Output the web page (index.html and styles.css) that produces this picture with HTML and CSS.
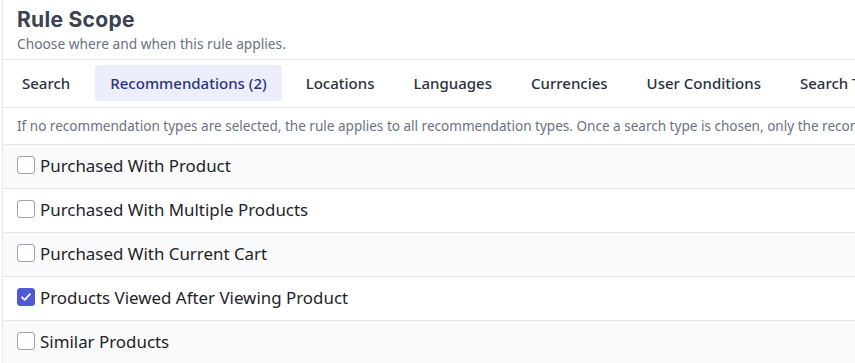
FILE: index.html
```html
<!DOCTYPE html>
<html>
<head>
<meta charset="utf-8">
<link rel="stylesheet" href="styles.css">
</head>
<body>
<div class="card">
  <div class="header">
    <div class="title">Rule Scope</div>
    <div class="subtitle">Choose where and when this rule applies.</div>
  </div>
  <div class="tabs">
    <div class="tab">Search</div>
    <div class="tab active">Recommendations (2)</div>
    <div class="tab">Locations</div>
    <div class="tab">Languages</div>
    <div class="tab">Currencies</div>
    <div class="tab">User Conditions</div>
    <div class="tab">Search Terms</div>
  </div>
  <div class="info">If no recommendation types are selected, the rule applies to all recommendation types. Once a search type is chosen, only the recommendation types selected will be affected.</div>
  <div class="list">
    <label class="row"><span class="box"></span><span class="label">Purchased With Product</span></label>
    <label class="row"><span class="box"></span><span class="label">Purchased With Multiple Products</span></label>
    <label class="row"><span class="box"></span><span class="label">Purchased With Current Cart</span></label>
    <label class="row"><span class="box checked"><svg viewBox="0 0 18 18" width="18" height="18"><path d="M4.6 9.3 L7.6 12.2 L13.4 5.8" fill="none" stroke="#fff" stroke-width="2" stroke-linecap="round" stroke-linejoin="round"/></svg></span><span class="label">Products Viewed After Viewing Product</span></label>
    <label class="row"><span class="box"></span><span class="label">Similar Products</span></label>
  </div>
</div>
</body>
</html>
```
FILE: styles.css
```css
html, body {
  margin: 0;
  padding: 0;
  background: #ffffff;
  overflow: hidden;
}
body {
  font-family: "Noto Sans", "Open Sans", sans-serif;
  width: 855px;
  height: 363px;
}
.card {
  margin-left: 2px;
  border-left: 1px solid #e5e7eb;
  width: 853px;
  overflow: hidden;
  background: #fff;
}
.header {
  padding: 5px 14px 6px;
  border-bottom: 1px solid #e5e7eb;
}
.title {
  font-family: "Inter", "Open Sans", sans-serif;
  font-size: 21px;
  line-height: 30px;
  font-weight: 700;
  letter-spacing: 0.3px;
  color: #3b4252;
}
.subtitle {
  font-size: 13.75px;
  line-height: 18px;
  color: #6b7280;
}
.tabs {
  display: flex;
  gap: 9px;
  padding: 5px 4px 6px;
  border-bottom: 1px solid #e5e7eb;
  white-space: nowrap;
}
.tab {
  height: 36px;
  line-height: 36px;
  padding: 0 15px;
  border-radius: 3px;
  font-size: 15px;
  font-weight: 500;
  color: #2b3040;
  flex: none;
}
.tab:first-child {
  margin-right: 1px;
}
.tab.active {
  background: #eceefb;
  color: #2a3384;
}
.info {
  height: 36px;
  line-height: 36px;
  padding: 0 14px;
  font-size: 13.55px;
  color: #6b7280;
  white-space: nowrap;
  overflow: hidden;
  border-bottom: 1px solid #e5e7eb;
}
.list {
  display: flex;
  flex-direction: column;
}
.row {
  display: flex;
  align-items: center;
  gap: 5px;
  box-sizing: border-box;
  height: 44px;
  padding: 0 14px 3px;
  border-bottom: 1px solid #e5e7eb;
  background: #ffffff;
}
.row:nth-child(odd) {
  background: #f9fafb;
}
.box {
  width: 16px;
  height: 16px;
  border: 1px solid #9ca3af;
  border-radius: 3px;
  background: #fff;
  display: flex;
  align-items: center;
  justify-content: center;
  flex: none;
}
.box.checked {
  background: #4f5bd5;
  border-color: #4f5bd5;
}
.box svg {
  display: block;
}
.label {
  font-size: 16.9px;
  color: #1f2329;
}
```
